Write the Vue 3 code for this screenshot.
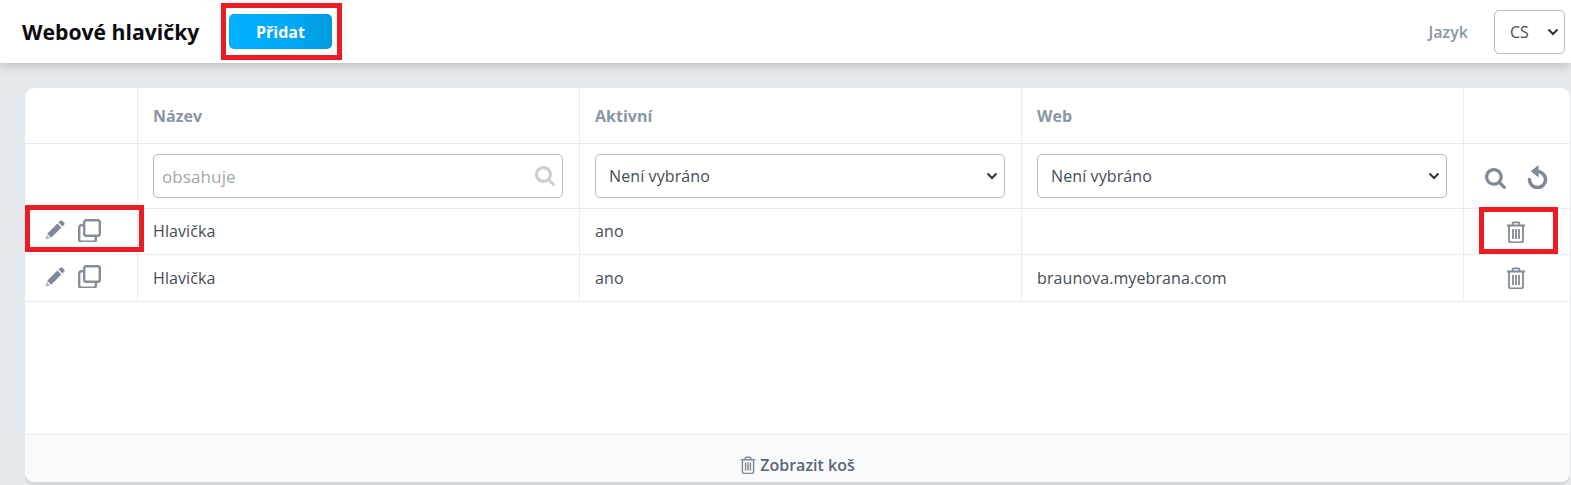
<script setup>
const rows = [
  { name: 'Hlavička', active: 'ano', web: '', marked: true },
  { name: 'Hlavička', active: 'ano', web: 'braunova.myebrana.com', marked: false },
]
const searchPath = 'M1216 832q0-185-131.500-316.500t-316.500-131.500-316.500 131.500-131.500 316.500 131.500 316.500 316.500 131.500 316.500-131.500 131.500-316.500zm512 832q0 52-38 90t-90 38q-54 0-90-38l-343-342q-179 124-399 124-143 0-273.500-55.500t-225-150-150-225-55.500-273.500 55.500-273.500 150-225 225-150 273.500-55.500 273.500 55.500 225 150 150 225 55.500 273.500q0 220-124 399l343 343q37 37 37 90z'
const trashPath = 'M1 4.500h18M6.500 4.500V2.800A1.500 1.500 0 0 1 8 1.300h4a1.500 1.500 0 0 1 1.500 1.500v1.700M3 4.500v15a2 2 0 0 0 2 2h10a2 2 0 0 0 2-2v-15M7 8v10M10 8v10M13 8v10'
</script>

<template>
  <div class="page">
    <header class="top">
      <h1 class="title">Webové hlavičky</h1>
      <div class="add-wrap">
        <button class="add" type="button">Přidat</button>
        <span class="mark mark-add"></span>
      </div>
      <span class="lang-label">Jazyk</span>
      <div class="lang-select">
        <span>CS</span>
        <svg class="chev" viewBox="0 0 12 8"><path d="M1.500 1.500 6 6l4.500-4.500" /></svg>
      </div>
    </header>

    <main class="content">
      <section class="card">
        <div class="grid head">
          <div class="cell"></div>
          <div class="cell">Název</div>
          <div class="cell">Aktivní</div>
          <div class="cell">Web</div>
          <div class="cell last"></div>
        </div>
        <div class="grid filter">
          <div class="cell"></div>
          <div class="cell input-cell">
            <div class="field search-field">
              <span class="placeholder">obsahuje</span>
              <svg class="search-in" viewBox="64 128 1664 1664"><path :d="searchPath" /></svg>
            </div>
          </div>
          <div class="cell input-cell">
            <div class="field"><span>Není vybráno</span><svg class="chev" viewBox="0 0 12 8"><path d="M1.500 1.500 6 6l4.500-4.500" /></svg></div>
          </div>
          <div class="cell input-cell">
            <div class="field"><span>Není vybráno</span><svg class="chev" viewBox="0 0 12 8"><path d="M1.500 1.500 6 6l4.500-4.500" /></svg></div>
          </div>
          <div class="cell last tools">
            <svg class="tool" viewBox="64 128 1664 1664"><path :d="searchPath" /></svg>
            <svg class="undo" viewBox="0 0 20 23"><path class="undo-arc" d="M2.300 14A7.700 7.700 0 1 0 10 6.300" /><path d="M11 0v12L3.500 6z" /></svg>
          </div>
        </div>
        <div v-for="(row, i) in rows" :key="i" class="grid row">
          <div class="cell actions">
            <svg class="pencil" viewBox="0 0 20 20"><path d="M15.200.8a1.500 1.500 0 0 1 2 0l2 2a1.500 1.500 0 0 1 0 2l-1.700 1.700-4-4zM12.400 3.600l4 4L6.200 17.800l-4-4z" /><path class="tip" d="M1.700 14.800l3.500 3.500-4.700 1.200z" /></svg>
            <svg class="copy" viewBox="0 0 23 23"><rect x="6.200" y="1.200" width="15.600" height="15.600" rx="2" /><path d="M6.200 6.200H3.200a2 2 0 0 0-2 2v12.600a2 2 0 0 0 2 2h12.600a2 2 0 0 0 2-2v-4" /></svg>
            <span v-if="row.marked" class="mark mark-edit"></span>
          </div>
          <div class="cell text">{{ row.name }}</div>
          <div class="cell text">{{ row.active }}</div>
          <div class="cell text">{{ row.web }}</div>
          <div class="cell last trash-cell">
            <svg class="trash" viewBox="0 0 20 22"><path :d="trashPath" /></svg>
            <span v-if="row.marked" class="mark mark-del"></span>
          </div>
        </div>
        <div class="spacer"></div>
        <footer class="foot">
          <svg class="trash small" viewBox="0 0 20 22"><path :d="trashPath" /></svg>
          <span>Zobrazit koš</span>
        </footer>
      </section>
    </main>
  </div>
</template>

<style>
html, body { margin: 0; background: #e4e9ed; }
</style>

<style scoped>
* { box-sizing: border-box; }
.page {
  width: 1571px;
  height: 485px;
  overflow: hidden;
  display: flex;
  flex-direction: column;
  background: #e4e9ed;
  font-family: "Open Sans", sans-serif;
  color: #454c58;
  font-size: 16px;
}
.top {
  height: 63px;
  flex: none;
  display: flex;
  align-items: center;
  background: #fff;
  padding: 0 6px 0 22px;
  box-shadow: 0 2px 10px rgba(60, 70, 80, .28);
  position: relative;
  z-index: 1;
}
.title { margin: 0; width: 207px; font-size: 21.200px; font-weight: 700; color: #0b0b0f; white-space: nowrap; }
.add-wrap { position: relative; margin-right: auto; }
.add {
  display: block;
  width: 103px;
  height: 35px;
  border: 0;
  border-radius: 5px;
  background: linear-gradient(90deg, #00b0ff 0%, #00a9f5 55%, #009be0 100%);
  color: #fff;
  font: 700 16px "Open Sans", sans-serif;
  padding: 0;
}
.mark { position: absolute; border: 5px solid #ed1c24; pointer-events: none; }
.mark-add { left: -8px; top: -11px; width: 121px; height: 57px; }
.mark-edit { left: 0; top: -4px; width: 119px; height: 47px; }
.mark-del { left: 15px; top: -2px; width: 79px; height: 47px; }
.lang-label { color: #8a96a3; font-weight: 600; font-size: 16px; margin-right: 26px; }
.lang-select {
  width: 71px;
  height: 44px;
  border: 1px solid #b4bbc2;
  border-radius: 5px;
  display: flex;
  align-items: center;
  justify-content: space-between;
  padding: 0 5px 0 15px;
}
.chev { width: 12px; height: 8px; fill: none; stroke: #333; stroke-width: 2; }
.content { flex: 1; padding: 25px 1px 3px 25px; min-height: 0; }
.card {
  height: 100%;
  background: #fff;
  border-radius: 9px;
  display: flex;
  flex-direction: column;
  overflow: hidden;
  box-shadow: 0 3px 0 #d2d7da;
}
.grid {
  display: grid;
  grid-template-columns: 113px 442px 442px 442px 106px;
  border-bottom: 1px solid #e6ecf2;
  flex: none;
}
.cell {
  border-right: 1px solid #e6ecf2;
  padding: 0 15px;
  display: flex;
  align-items: center;
  position: relative;
  min-width: 0;
}
.cell.last { border-right: 0; }
.input-cell { padding-right: 16px; }
.text { letter-spacing: .1px; }
.head { height: 56px; font-weight: 700; color: #8a96a3; }
.filter { height: 65px; }
.row { height: 46px; }
.row .text { padding-bottom: 2px; }
.row + .row { height: 47px; }
.row + .row .text { padding-bottom: 0; }
.field {
  width: 100%;
  height: 44px;
  border: 1px solid #b4bbc2;
  border-radius: 5px;
  display: flex;
  align-items: center;
  justify-content: space-between;
  padding: 0 6px 0 13px;
  letter-spacing: .1px;
}
.search-field { padding: 0 7px 0 8px; }
.placeholder { color: #a3a8ad; font-size: 17px; }
.search-in { width: 20px; height: 20px; fill: #cdcdcd; }
.tools { gap: 21px; padding: 5px 0 0 21px; }
.tool { width: 21px; height: 21px; fill: #7f8a96; }
.undo { width: 21px; height: 24px; margin-top: -3px; fill: #7f8a96; }
.undo-arc { fill: none; stroke: #7f8a96; stroke-width: 3.400; stroke-linecap: round; }
.actions { padding: 0 0 3px 20px; gap: 13px; }
.pencil { width: 20px; height: 20px; fill: #7f8a96; }
.pencil .tip { fill: #b4bac1; }
.copy { width: 23px; height: 23px; fill: none; stroke: #858e99; stroke-width: 2.400; }
.trash-cell { padding-left: 42px; }
.trash { width: 20px; height: 22px; fill: none; stroke: #7f8a96; stroke-width: 1.800; }
.trash.small { width: 16px; height: 18px; }
.spacer { flex: 1; }
.foot {
  height: 48px;
  flex: none;
  border-top: 1px solid #e6ecf2;
  background: #f9fafc;
  display: flex;
  align-items: center;
  justify-content: center;
  gap: 4px;
  padding-top: 13px;
  font-weight: 600;
  color: #5a6675;
}
</style>
